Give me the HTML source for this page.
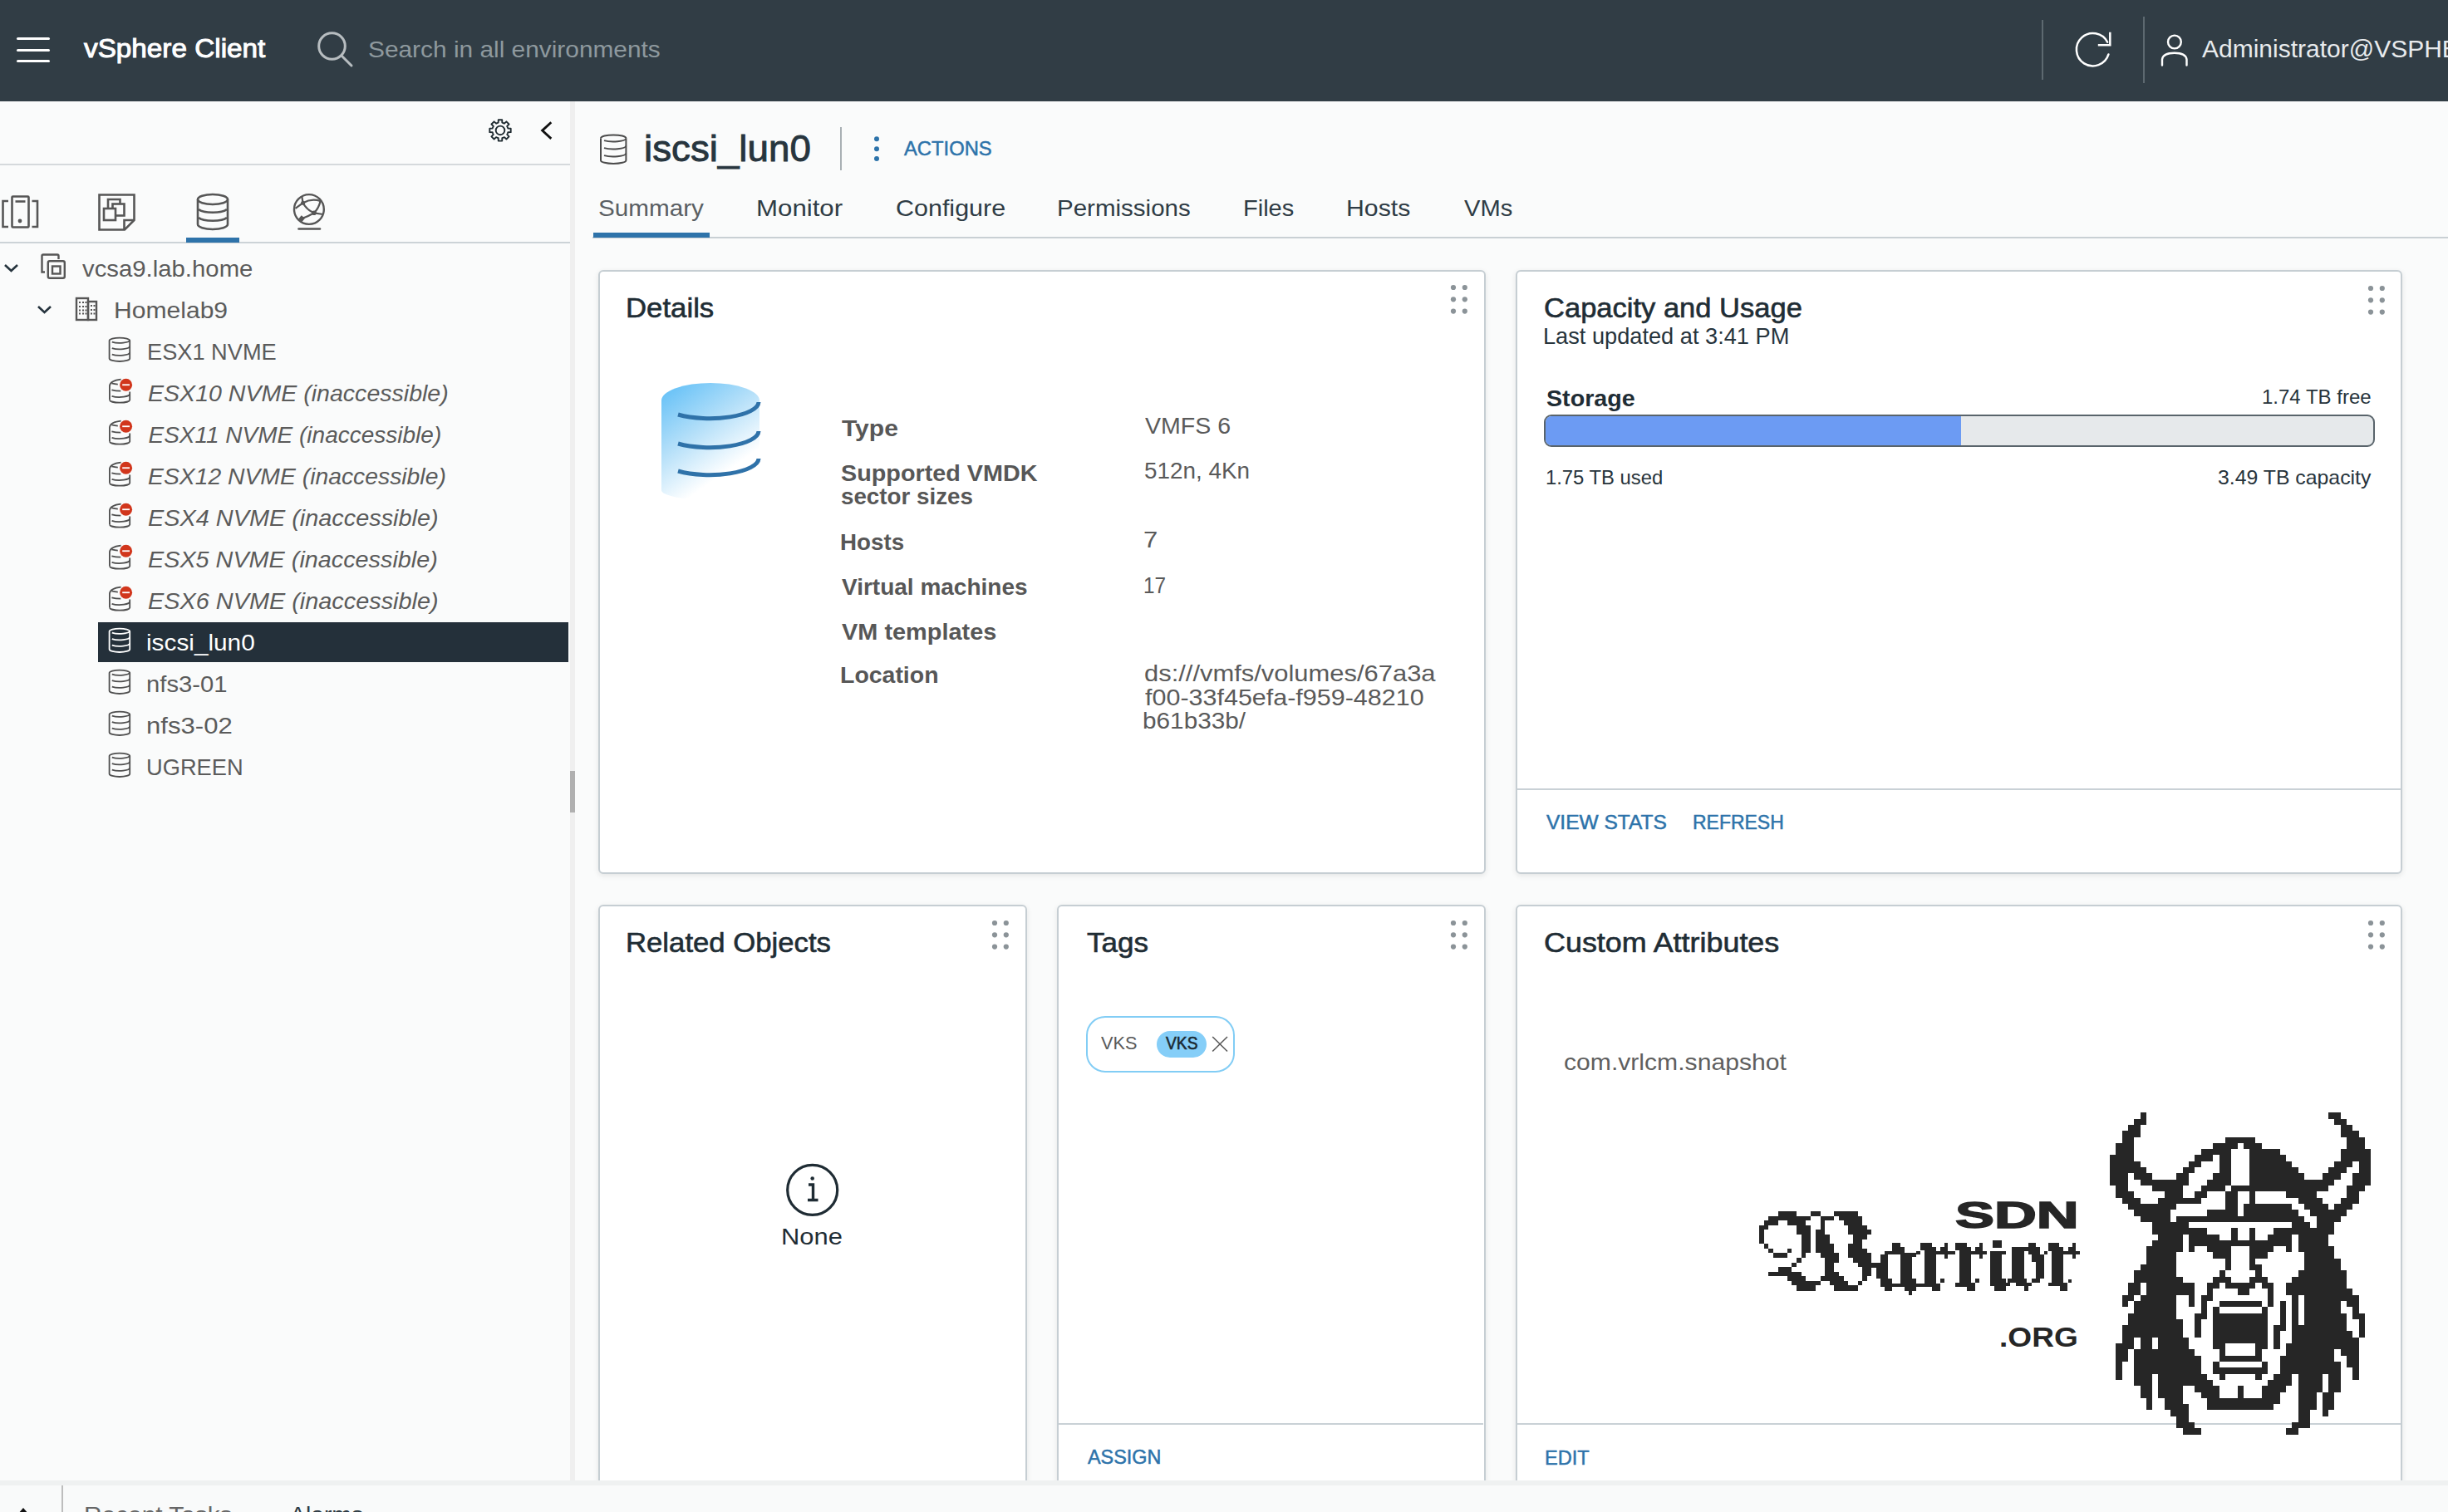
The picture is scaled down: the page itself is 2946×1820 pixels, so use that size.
<!DOCTYPE html>
<html><head><meta charset="utf-8"><title>vSphere Client</title>
<style>
html,body{margin:0;padding:0;}
body{width:2946px;height:1820px;position:relative;overflow:hidden;background:#fafbfb;font-family:'Liberation Sans', sans-serif;}
.t{position:absolute;line-height:1;white-space:pre;transform-origin:0 0;}
.a{position:absolute;}
svg.a{overflow:visible;}
</style></head><body>
<!-- header -->
<div class="a" style="left:0;top:0;width:2946px;height:122px;background:#313d45"></div>
<div class="a" style="left:20px;top:45px;width:40px;height:3px;background:#fff;border-radius:2px"></div>
<div class="a" style="left:20px;top:58.5px;width:40px;height:3px;background:#fff;border-radius:2px"></div>
<div class="a" style="left:20px;top:72px;width:40px;height:3px;background:#fff;border-radius:2px"></div>
<svg class="a" style="left:380px;top:36px" width="48" height="48" viewBox="0 0 48 48">
  <circle cx="19.5" cy="19.5" r="15.8" fill="none" stroke="#b7bdc0" stroke-width="3"/>
  <line x1="31" y1="31" x2="43" y2="43" stroke="#b7bdc0" stroke-width="3" stroke-linecap="round"/>
</svg>
<div class="a" style="left:2457px;top:24px;width:2px;height:72px;background:#5d6970"></div>
<div class="a" style="left:2579px;top:20px;width:2px;height:80px;background:#5d6970"></div>
<svg class="a" style="left:0;top:0" width="2946" height="122" viewBox="0 0 2946 122" fill="none" stroke="#ffffff" stroke-width="2.5">
  <path d="M 2537.44 65.46 A 19.7 19.7 0 1 1 2536.15 50.76" stroke-linecap="round"/>
  <path d="M 2524.8 54.2 L 2539.3 54.2 L 2539.3 38.7"/>
  <circle cx="2616.9" cy="50.5" r="7.9" stroke-width="2.4"/>
  <path d="M 2602 78.5 L 2602 71.5 Q 2603 63.8 2616.8 63.8 Q 2630.5 63.8 2631.5 71.5 L 2631.5 78.5" stroke-width="2.4" stroke-linecap="round"/>
</svg>

<!-- left panel -->
<svg class="a" style="left:0;top:0" width="700" height="200" viewBox="0 0 700 200">
  <path fill="none" stroke="#1f2b31" stroke-width="1.9" stroke-linejoin="round" d="M598.33 148.03 L599.68 147.59 L599.76 144.20 L604.24 144.20 L604.32 147.59 L605.67 148.03 L606.94 148.67 L609.40 146.33 L612.57 149.50 L610.23 151.96 L610.87 153.23 L611.31 154.58 L614.70 154.66 L614.70 159.14 L611.31 159.22 L610.87 160.57 L610.23 161.84 L612.57 164.30 L609.40 167.47 L606.94 165.13 L605.67 165.77 L604.32 166.21 L604.24 169.60 L599.76 169.60 L599.68 166.21 L598.33 165.77 L597.06 165.13 L594.60 167.47 L591.43 164.30 L593.77 161.84 L593.13 160.57 L592.69 159.22 L589.30 159.14 L589.30 154.66 L592.69 154.58 L593.13 153.23 L593.77 151.96 L591.43 149.50 L594.60 146.33 L597.06 148.67 Z"/>
  <circle cx="602.0" cy="156.9" r="5.3" fill="none" stroke="#1f2b31" stroke-width="1.9"/>
  <path d="M 663.3 147.3 L 652.6 157.1 L 663.3 166.9" fill="none" stroke="#111" stroke-width="2.8"/>
</svg>
<div class="a" style="left:0;top:197px;width:686px;height:2px;background:#d5d9dc"></div>
<!-- nav icons -->
<svg class="a" style="left:0;top:230px" width="400" height="50" viewBox="0 230 400 50" stroke="#565656" fill="none" stroke-width="2.6">
  <!-- hosts -->
  <path d="M 10 242 L 3.5 242 L 3.5 273 L 10 273"/>
  <path d="M 38.5 242 L 45 242 L 45 273 L 38.5 273"/>
  <rect x="14.5" y="236.5" width="20" height="37" rx="1"/>
  <line x1="18.5" y1="242.5" x2="30.5" y2="242.5"/>
  <circle cx="24" cy="266" r="2.4" fill="#565656" stroke="none"/>
  <!-- vms -->
  <path d="M 119.5 234.5 L 161.5 234.5 L 161.5 265 L 150 276.5 L 119.5 276.5 Z"/>
  <path d="M 161.5 265 L 149.5 265 L 149.5 276.5"/>
  <path d="M 130 251 L 130 240 L 144.5 240 L 144.5 245"/>
  <rect x="135.5" y="245.5" width="14" height="14"/>
  <rect x="125" y="251" width="14" height="14" fill="#fafbfb"/>
  <!-- storage -->
  <ellipse cx="256" cy="240" rx="18" ry="6"/>
  <path d="M 238 240 L 238 270 A 18 6 0 0 0 274 270 L 274 240"/>
  <path d="M 239 252 A 18 5.5 0 0 0 273 252"/>
  <path d="M 239 262 A 18 5.5 0 0 0 273 262"/>
  <!-- network -->
  <circle cx="371.9" cy="252" r="17.9" stroke-width="2.4"/>
  <g stroke-width="2.2">
  <path d="M 363.3 236.5 L 364.6 244.2 L 355.5 250.8"/>
  <path d="M 364.6 244.2 Q 375 238.5 385.5 242"/>
  <path d="M 364.6 244.2 Q 369 252.5 378 256.3"/>
  <path d="M 378 256.3 Q 384 250 385.5 242"/>
  <path d="M 378 256.3 L 388.8 258"/>
  <path d="M 363 263.2 Q 371 260.5 378 256.3"/>
  </g>
  <circle cx="364.6" cy="244.3" r="2.5" fill="#565656" stroke="none"/>
  <circle cx="378" cy="256.3" r="2.8" fill="#565656" stroke="none"/>
  <rect x="360.3" y="260.3" width="5.6" height="5.6" transform="rotate(40 363.1 263.1)" fill="#565656" stroke="none"/>
  <line x1="359.5" y1="275.5" x2="385" y2="275.5" stroke-linecap="round"/>
</svg>
<div class="a" style="left:0;top:291px;width:686px;height:2px;background:#ccd3d7"></div>
<div class="a" style="left:224px;top:286px;width:64px;height:6px;background:#2e73aa"></div>
<!-- tree -->
<svg class="a" style="left:0;top:300px" width="100" height="100" viewBox="0 300 100 100" fill="none" stroke-width="2.6">
  <path d="M 6 319 L 13.5 326 L 21 319" stroke="#25333d"/>
  <path d="M 46 369 L 53.5 376 L 61 369" stroke="#25333d"/>
</svg>
<svg class="a" style="left:40px;top:300px" width="100" height="100" viewBox="40 300 100 100" fill="none" stroke="#565656" stroke-width="2.4">
  <path d="M 54 327.5 L 50.5 327.5 L 50.5 308 Q 50.5 306.5 52 306.5 L 69 306.5 Q 70.5 306.5 70.5 308 L 70.5 312"/>
  <rect x="57.8" y="314.2" width="20" height="20.5" rx="2"/>
  <rect x="63" y="320.5" width="9.5" height="9"/>
  <rect x="92" y="359" width="14" height="26"/>
  <rect x="106" y="363" width="10" height="22"/>
  <g stroke="none" fill="#565656">
    <rect x="95" y="363" width="2" height="2"/><rect x="99" y="363" width="2" height="2"/><rect x="102.5" y="363" width="2" height="2"/>
    <rect x="95" y="368" width="2" height="2"/><rect x="99" y="368" width="2" height="2"/><rect x="102.5" y="368" width="2" height="2"/>
    <rect x="95" y="372.5" width="2" height="2"/><rect x="99" y="372.5" width="2" height="2"/><rect x="102.5" y="372.5" width="2" height="2"/>
    <rect x="95" y="376.5" width="2" height="2"/><rect x="99" y="376.5" width="2" height="2"/><rect x="102.5" y="376.5" width="2" height="2"/>
    <rect x="109" y="367" width="2" height="2"/><rect x="112.5" y="367" width="2" height="2"/>
    <rect x="109" y="372" width="2" height="2"/><rect x="112.5" y="372" width="2" height="2"/>
    <rect x="109" y="376.5" width="2" height="2"/><rect x="112.5" y="376.5" width="2" height="2"/>
  </g>
</svg>
<div class="a" style="left:118px;top:749px;width:566px;height:48px;background:#24303a"></div>
<svg class="a" style="left:128px;top:406px" width="34" height="34" viewBox="0 0 34 34" fill="none" stroke="#4f4f4f" stroke-width="1.8"><path d="M 3.6 4 A 12.3 3.4 0 0 1 28.2 4"/><path d="M 3.6 4 L 3.6 25.4 A 12.3 3.6 0 0 0 28.2 25.4 L 28.2 4"/><path d="M 6.8 5.72 A 12.3 3.6 0 0 0 28.2 3.30"/><path d="M 6.8 13.12 A 12.3 3.6 0 0 0 28.2 10.70"/><path d="M 6.8 20.62 A 12.3 3.6 0 0 0 28.2 18.20"/></svg>
<svg class="a" style="left:128px;top:456px" width="34" height="34" viewBox="0 0 34 34" fill="none" stroke="#4f4f4f" stroke-width="1.8"><path d="M 3.9 25.4 L 3.9 8.5 Q 4.5 2 17.6 0.6"/><path d="M 6.4 5.4 Q 10 6.4 13.8 6.6"/><path d="M 6.4 13.4 Q 11 14.6 17.3 14.6"/><path d="M 6.6 20.8 A 12.3 3.6 0 0 0 28 17.9"/><path d="M 3.9 25.4 A 12.2 3.6 0 0 0 28.2 25.4 L 28.2 15.6"/><circle cx="23.6" cy="7.2" r="7.5" fill="#d1361c" stroke="none"/><rect x="19.2" y="6.35" width="8.8" height="1.8" fill="#fff" stroke="none"/></svg>
<svg class="a" style="left:128px;top:506px" width="34" height="34" viewBox="0 0 34 34" fill="none" stroke="#4f4f4f" stroke-width="1.8"><path d="M 3.9 25.4 L 3.9 8.5 Q 4.5 2 17.6 0.6"/><path d="M 6.4 5.4 Q 10 6.4 13.8 6.6"/><path d="M 6.4 13.4 Q 11 14.6 17.3 14.6"/><path d="M 6.6 20.8 A 12.3 3.6 0 0 0 28 17.9"/><path d="M 3.9 25.4 A 12.2 3.6 0 0 0 28.2 25.4 L 28.2 15.6"/><circle cx="23.6" cy="7.2" r="7.5" fill="#d1361c" stroke="none"/><rect x="19.2" y="6.35" width="8.8" height="1.8" fill="#fff" stroke="none"/></svg>
<svg class="a" style="left:128px;top:556px" width="34" height="34" viewBox="0 0 34 34" fill="none" stroke="#4f4f4f" stroke-width="1.8"><path d="M 3.9 25.4 L 3.9 8.5 Q 4.5 2 17.6 0.6"/><path d="M 6.4 5.4 Q 10 6.4 13.8 6.6"/><path d="M 6.4 13.4 Q 11 14.6 17.3 14.6"/><path d="M 6.6 20.8 A 12.3 3.6 0 0 0 28 17.9"/><path d="M 3.9 25.4 A 12.2 3.6 0 0 0 28.2 25.4 L 28.2 15.6"/><circle cx="23.6" cy="7.2" r="7.5" fill="#d1361c" stroke="none"/><rect x="19.2" y="6.35" width="8.8" height="1.8" fill="#fff" stroke="none"/></svg>
<svg class="a" style="left:128px;top:606px" width="34" height="34" viewBox="0 0 34 34" fill="none" stroke="#4f4f4f" stroke-width="1.8"><path d="M 3.9 25.4 L 3.9 8.5 Q 4.5 2 17.6 0.6"/><path d="M 6.4 5.4 Q 10 6.4 13.8 6.6"/><path d="M 6.4 13.4 Q 11 14.6 17.3 14.6"/><path d="M 6.6 20.8 A 12.3 3.6 0 0 0 28 17.9"/><path d="M 3.9 25.4 A 12.2 3.6 0 0 0 28.2 25.4 L 28.2 15.6"/><circle cx="23.6" cy="7.2" r="7.5" fill="#d1361c" stroke="none"/><rect x="19.2" y="6.35" width="8.8" height="1.8" fill="#fff" stroke="none"/></svg>
<svg class="a" style="left:128px;top:656px" width="34" height="34" viewBox="0 0 34 34" fill="none" stroke="#4f4f4f" stroke-width="1.8"><path d="M 3.9 25.4 L 3.9 8.5 Q 4.5 2 17.6 0.6"/><path d="M 6.4 5.4 Q 10 6.4 13.8 6.6"/><path d="M 6.4 13.4 Q 11 14.6 17.3 14.6"/><path d="M 6.6 20.8 A 12.3 3.6 0 0 0 28 17.9"/><path d="M 3.9 25.4 A 12.2 3.6 0 0 0 28.2 25.4 L 28.2 15.6"/><circle cx="23.6" cy="7.2" r="7.5" fill="#d1361c" stroke="none"/><rect x="19.2" y="6.35" width="8.8" height="1.8" fill="#fff" stroke="none"/></svg>
<svg class="a" style="left:128px;top:706px" width="34" height="34" viewBox="0 0 34 34" fill="none" stroke="#4f4f4f" stroke-width="1.8"><path d="M 3.9 25.4 L 3.9 8.5 Q 4.5 2 17.6 0.6"/><path d="M 6.4 5.4 Q 10 6.4 13.8 6.6"/><path d="M 6.4 13.4 Q 11 14.6 17.3 14.6"/><path d="M 6.6 20.8 A 12.3 3.6 0 0 0 28 17.9"/><path d="M 3.9 25.4 A 12.2 3.6 0 0 0 28.2 25.4 L 28.2 15.6"/><circle cx="23.6" cy="7.2" r="7.5" fill="#d1361c" stroke="none"/><rect x="19.2" y="6.35" width="8.8" height="1.8" fill="#fff" stroke="none"/></svg>
<svg class="a" style="left:128px;top:756px" width="34" height="34" viewBox="0 0 34 34" fill="none" stroke="#ffffff" stroke-width="1.8"><path d="M 3.6 4 A 12.3 3.4 0 0 1 28.2 4"/><path d="M 3.6 4 L 3.6 25.4 A 12.3 3.6 0 0 0 28.2 25.4 L 28.2 4"/><path d="M 6.8 5.72 A 12.3 3.6 0 0 0 28.2 3.30"/><path d="M 6.8 13.12 A 12.3 3.6 0 0 0 28.2 10.70"/><path d="M 6.8 20.62 A 12.3 3.6 0 0 0 28.2 18.20"/></svg>
<svg class="a" style="left:128px;top:806px" width="34" height="34" viewBox="0 0 34 34" fill="none" stroke="#4f4f4f" stroke-width="1.8"><path d="M 3.6 4 A 12.3 3.4 0 0 1 28.2 4"/><path d="M 3.6 4 L 3.6 25.4 A 12.3 3.6 0 0 0 28.2 25.4 L 28.2 4"/><path d="M 6.8 5.72 A 12.3 3.6 0 0 0 28.2 3.30"/><path d="M 6.8 13.12 A 12.3 3.6 0 0 0 28.2 10.70"/><path d="M 6.8 20.62 A 12.3 3.6 0 0 0 28.2 18.20"/></svg>
<svg class="a" style="left:128px;top:856px" width="34" height="34" viewBox="0 0 34 34" fill="none" stroke="#4f4f4f" stroke-width="1.8"><path d="M 3.6 4 A 12.3 3.4 0 0 1 28.2 4"/><path d="M 3.6 4 L 3.6 25.4 A 12.3 3.6 0 0 0 28.2 25.4 L 28.2 4"/><path d="M 6.8 5.72 A 12.3 3.6 0 0 0 28.2 3.30"/><path d="M 6.8 13.12 A 12.3 3.6 0 0 0 28.2 10.70"/><path d="M 6.8 20.62 A 12.3 3.6 0 0 0 28.2 18.20"/></svg>
<svg class="a" style="left:128px;top:906px" width="34" height="34" viewBox="0 0 34 34" fill="none" stroke="#4f4f4f" stroke-width="1.8"><path d="M 3.6 4 A 12.3 3.4 0 0 1 28.2 4"/><path d="M 3.6 4 L 3.6 25.4 A 12.3 3.6 0 0 0 28.2 25.4 L 28.2 4"/><path d="M 6.8 5.72 A 12.3 3.6 0 0 0 28.2 3.30"/><path d="M 6.8 13.12 A 12.3 3.6 0 0 0 28.2 10.70"/><path d="M 6.8 20.62 A 12.3 3.6 0 0 0 28.2 18.20"/></svg>
<!-- splitter -->
<div class="a" style="left:686px;top:122px;width:6px;height:1660px;background:#efefef"></div>
<div class="a" style="left:686px;top:928px;width:6px;height:50px;background:#b0b0b0"></div>
<!-- title -->
<svg class="a" style="left:700px;top:150px" width="70" height="60" viewBox="700 150 70 60" fill="none" stroke="#4b4b4b" stroke-width="2">
  <path d="M 723 166.4 A 15.2 4 0 0 1 753.4 166.4"/>
  <path d="M 723 166.4 L 723 193 A 15.2 4 0 0 0 753.4 193 L 753.4 166.4"/>
  <path d="M 727 169.1 A 15.2 4 0 0 0 753.4 166.6"/>
  <path d="M 727 178.1 A 15.2 4 0 0 0 753.4 175.6"/>
  <path d="M 727 187.1 A 15.2 4 0 0 0 753.4 184.6"/>
</svg>
<div class="a" style="left:1011px;top:153px;width:2px;height:52px;background:#a9b0b4"></div>
<svg class="a" style="left:1048px;top:160px" width="14" height="38" viewBox="0 0 14 38" fill="#2d73aa">
  <circle cx="7" cy="7.2" r="3"/><circle cx="7" cy="19.2" r="3"/><circle cx="7" cy="31" r="3"/>
</svg>
<!-- tabs -->
<div class="a" style="left:713px;top:285px;width:2233px;height:2px;background:#c9d0d4"></div>
<div class="a" style="left:714px;top:280px;width:140px;height:6px;background:#2e73aa"></div>
<!-- cards -->
<div class="a" style="left:720px;top:325px;width:1064px;height:723px;border:2px solid #c6ced3;border-radius:6px;background:#fff;box-shadow:0 2px 7px rgba(0,0,0,0.09)"></div>
<div class="a" style="left:1824px;top:325px;width:1063px;height:723px;border:2px solid #c6ced3;border-radius:6px;background:#fff;box-shadow:0 2px 7px rgba(0,0,0,0.09)"></div>
<div class="a" style="left:720px;top:1089px;width:512px;height:760px;border:2px solid #c6ced3;border-radius:6px;background:#fff;box-shadow:0 2px 7px rgba(0,0,0,0.09)"></div>
<div class="a" style="left:1272px;top:1089px;width:512px;height:760px;border:2px solid #c6ced3;border-radius:6px;background:#fff;box-shadow:0 2px 7px rgba(0,0,0,0.09)"></div>
<div class="a" style="left:1824px;top:1089px;width:1063px;height:760px;border:2px solid #c6ced3;border-radius:6px;background:#fff;box-shadow:0 2px 7px rgba(0,0,0,0.09)"></div>
<!-- card footers -->
<div class="a" style="left:1826px;top:949px;width:1063px;height:2px;background:#c9d1d6"></div>
<div class="a" style="left:1274px;top:1713px;width:511px;height:2px;background:#c9d1d6"></div>
<div class="a" style="left:1826px;top:1713px;width:1063px;height:2px;background:#c9d1d6"></div>
<svg class="a" style="left:1745.0px;top:342.0px" width="24" height="38" viewBox="0 0 24 38" fill="#8b9398"><circle cx="4.0" cy="4.0" r="3.1"/><circle cx="17.8" cy="4.0" r="3.1"/><circle cx="4.0" cy="18.3" r="3.1"/><circle cx="17.8" cy="18.3" r="3.1"/><circle cx="4.0" cy="32.6" r="3.1"/><circle cx="17.8" cy="32.6" r="3.1"/></svg>
<svg class="a" style="left:2848.7px;top:343.0px" width="24" height="38" viewBox="0 0 24 38" fill="#8b9398"><circle cx="4.0" cy="4.0" r="3.1"/><circle cx="17.8" cy="4.0" r="3.1"/><circle cx="4.0" cy="18.3" r="3.1"/><circle cx="17.8" cy="18.3" r="3.1"/><circle cx="4.0" cy="32.6" r="3.1"/><circle cx="17.8" cy="32.6" r="3.1"/></svg>
<svg class="a" style="left:1192.5px;top:1107.0px" width="24" height="38" viewBox="0 0 24 38" fill="#8b9398"><circle cx="4.0" cy="4.0" r="3.1"/><circle cx="17.8" cy="4.0" r="3.1"/><circle cx="4.0" cy="18.3" r="3.1"/><circle cx="17.8" cy="18.3" r="3.1"/><circle cx="4.0" cy="32.6" r="3.1"/><circle cx="17.8" cy="32.6" r="3.1"/></svg>
<svg class="a" style="left:1745.0px;top:1107.0px" width="24" height="38" viewBox="0 0 24 38" fill="#8b9398"><circle cx="4.0" cy="4.0" r="3.1"/><circle cx="17.8" cy="4.0" r="3.1"/><circle cx="4.0" cy="18.3" r="3.1"/><circle cx="17.8" cy="18.3" r="3.1"/><circle cx="4.0" cy="32.6" r="3.1"/><circle cx="17.8" cy="32.6" r="3.1"/></svg>
<svg class="a" style="left:2848.7px;top:1107.0px" width="24" height="38" viewBox="0 0 24 38" fill="#8b9398"><circle cx="4.0" cy="4.0" r="3.1"/><circle cx="17.8" cy="4.0" r="3.1"/><circle cx="4.0" cy="18.3" r="3.1"/><circle cx="17.8" cy="18.3" r="3.1"/><circle cx="4.0" cy="32.6" r="3.1"/><circle cx="17.8" cy="32.6" r="3.1"/></svg>
<!-- details db icon -->
<svg class="a" style="left:790px;top:455px" width="130" height="155" viewBox="790 455 130 155">
  <defs>
    <linearGradient id="dbg" x1="798" y1="472" x2="868" y2="572" gradientUnits="userSpaceOnUse">
      <stop offset="0" stop-color="#68c2f7"/>
      <stop offset="0.5" stop-color="#b3dff9"/>
      <stop offset="1" stop-color="#ffffff"/>
    </linearGradient>
  </defs>
  <path d="M 796 482 A 59 21 0 0 1 914 482 L 914 590 A 59 12 0 0 1 855 602 A 59 12 0 0 1 796 590 Z" fill="url(#dbg)"/>
  <g fill="none" stroke="#2f72a9" stroke-width="5">
    <path d="M 816 499 A 59 20 0 0 0 913 484"/>
    <path d="M 816 534 A 59 20 0 0 0 913 519"/>
    <path d="M 816 567 A 59 20 0 0 0 913 552"/>
  </g>
</svg>
<!-- progress -->
<div class="a" style="left:1858px;top:499px;width:996px;height:35px;border:2px solid #59646b;border-radius:9px;background:#e6e9eb;overflow:hidden">
  <div style="position:absolute;left:0;top:0;width:500px;height:35px;background:#6c9bf3"></div>
</div>
<!-- info icon -->
<svg class="a" style="left:940px;top:1395px" width="76" height="76" viewBox="0 0 76 76">
  <circle cx="37.7" cy="37.4" r="30" fill="none" stroke="#1f2c34" stroke-width="3.2"/>
  <circle cx="37.7" cy="23.5" r="2.3" fill="#1f2c34"/>
  <path d="M 33 31 L 38.5 31 L 38.5 49.5 M 32 49.5 L 44.5 49.5" fill="none" stroke="#1f2c34" stroke-width="3.4"/>
</svg>
<!-- tag pill -->
<div class="a" style="left:1306.5px;top:1223px;width:175px;height:63.5px;border:2px solid #82cdf5;border-radius:23px;background:#fff"></div>
<div class="a" style="left:1392px;top:1241px;width:60px;height:32px;border-radius:16px;background:#85cef8"></div>
<svg class="a" style="left:1456px;top:1245px" width="26" height="26" viewBox="0 0 26 26">
  <path d="M 3.2 3 L 21 20.5 M 21 3 L 3.2 20.5" stroke="#5a5a5a" stroke-width="1.6"/>
</svg>
<!-- bottom bar -->
<div class="a" style="left:0;top:1782px;width:2946px;height:6px;background:#eff1f1"></div>
<div class="a" style="left:0;top:1788px;width:2946px;height:32px;background:#f9fafa"></div>
<div class="a" style="left:74px;top:1788px;width:2px;height:32px;background:#bdbdbd"></div>
<svg class="a" style="left:18px;top:1812px" width="20" height="10" viewBox="0 0 20 10"><path d="M 4 10 L 10 3 L 16 10 Z" fill="#111"/></svg>
<svg class="a" style="left:0;top:0" width="2946" height="1820" viewBox="0 0 2946 1820"><path fill="#262626" shape-rendering="crispEdges" d="M2575.55 1339.30H2582.86V1346.61H2575.55ZM2802.16 1339.30H2816.78V1346.61H2802.16ZM2568.24 1346.61H2582.86V1353.92H2568.24ZM2809.47 1346.61H2824.09V1353.92H2809.47ZM2560.93 1353.92H2575.55V1361.23H2560.93ZM2816.78 1353.92H2831.40V1361.23H2816.78ZM2553.62 1361.23H2575.55V1368.54H2553.62ZM2816.78 1361.23H2838.71V1368.54H2816.78ZM2553.62 1368.54H2568.24V1375.85H2553.62ZM2677.89 1368.54H2714.44V1375.85H2677.89ZM2824.09 1368.54H2846.02V1375.85H2824.09ZM2546.31 1375.85H2568.24V1383.16H2546.31ZM2663.27 1375.85H2692.51V1383.16H2663.27ZM2699.82 1375.85H2721.75V1383.16H2699.82ZM2824.09 1375.85H2846.02V1383.16H2824.09ZM2546.31 1383.16H2568.24V1390.47H2546.31ZM2648.65 1383.16H2685.20V1390.47H2648.65ZM2707.13 1383.16H2743.68V1390.47H2707.13ZM2816.78 1383.16H2853.33V1390.47H2816.78ZM2539.00 1390.47H2568.24V1397.78H2539.00ZM2641.34 1390.47H2663.27V1397.78H2641.34ZM2670.58 1390.47H2685.20V1397.78H2670.58ZM2707.13 1390.47H2750.99V1397.78H2707.13ZM2816.78 1390.47H2853.33V1397.78H2816.78ZM2539.00 1397.78H2575.55V1405.09H2539.00ZM2634.03 1397.78H2648.65V1405.09H2634.03ZM2670.58 1397.78H2685.20V1405.09H2670.58ZM2707.13 1397.78H2758.30V1405.09H2707.13ZM2809.47 1397.78H2831.40V1405.09H2809.47ZM2838.71 1397.78H2853.33V1405.09H2838.71ZM2539.00 1405.09H2582.86V1412.40H2539.00ZM2626.72 1405.09H2641.34V1412.40H2626.72ZM2670.58 1405.09H2685.20V1412.40H2670.58ZM2707.13 1405.09H2765.61V1412.40H2707.13ZM2802.16 1405.09H2824.09V1412.40H2802.16ZM2838.71 1405.09H2853.33V1412.40H2838.71ZM2539.00 1412.40H2560.93V1419.71H2539.00ZM2568.24 1412.40H2590.17V1419.71H2568.24ZM2619.41 1412.40H2634.03V1419.71H2619.41ZM2663.27 1412.40H2685.20V1419.71H2663.27ZM2707.13 1412.40H2772.92V1419.71H2707.13ZM2794.85 1412.40H2816.78V1419.71H2794.85ZM2831.40 1412.40H2853.33V1419.71H2831.40ZM2539.00 1419.71H2560.93V1427.02H2539.00ZM2575.55 1419.71H2634.03V1427.02H2575.55ZM2655.96 1419.71H2685.20V1427.02H2655.96ZM2707.13 1419.71H2809.47V1427.02H2707.13ZM2831.40 1419.71H2853.33V1427.02H2831.40ZM2546.31 1427.02H2560.93V1434.33H2546.31ZM2590.17 1427.02H2626.72V1434.33H2590.17ZM2648.65 1427.02H2677.89V1434.33H2648.65ZM2685.20 1427.02H2802.16V1434.33H2685.20ZM2824.09 1427.02H2846.02V1434.33H2824.09ZM2546.31 1434.33H2568.24V1441.64H2546.31ZM2604.79 1434.33H2626.72V1441.64H2604.79ZM2641.34 1434.33H2655.96V1441.64H2641.34ZM2677.89 1434.33H2692.51V1441.64H2677.89ZM2707.13 1434.33H2714.44V1441.64H2707.13ZM2750.99 1434.33H2787.54V1441.64H2750.99ZM2824.09 1434.33H2838.71V1441.64H2824.09ZM2553.62 1441.64H2575.55V1448.95H2553.62ZM2597.48 1441.64H2648.65V1448.95H2597.48ZM2677.89 1441.64H2692.51V1448.95H2677.89ZM2707.13 1441.64H2714.44V1448.95H2707.13ZM2765.61 1441.64H2794.85V1448.95H2765.61ZM2816.78 1441.64H2838.71V1448.95H2816.78ZM2560.93 1448.95H2619.41V1456.26H2560.93ZM2677.89 1448.95H2692.51V1456.26H2677.89ZM2699.82 1448.95H2758.30V1456.26H2699.82ZM2772.92 1448.95H2802.16V1456.26H2772.92ZM2809.47 1448.95H2831.40V1456.26H2809.47ZM2568.24 1456.26H2612.10V1463.57H2568.24ZM2655.96 1456.26H2692.51V1463.57H2655.96ZM2699.82 1456.26H2765.61V1463.57H2699.82ZM2780.23 1456.26H2824.09V1463.57H2780.23ZM2575.55 1463.57H2612.10V1470.88H2575.55ZM2619.41 1463.57H2772.92V1470.88H2619.41ZM2787.54 1463.57H2816.78V1470.88H2787.54ZM2590.17 1470.88H2634.03V1478.19H2590.17ZM2758.30 1470.88H2780.23V1478.19H2758.30ZM2787.54 1470.88H2809.47V1478.19H2787.54ZM2590.17 1478.19H2655.96V1485.50H2590.17ZM2685.20 1478.19H2692.51V1485.50H2685.20ZM2707.13 1478.19H2714.44V1485.50H2707.13ZM2736.37 1478.19H2809.47V1485.50H2736.37ZM2597.48 1485.50H2626.72V1492.81H2597.48ZM2634.03 1485.50H2670.58V1492.81H2634.03ZM2685.20 1485.50H2692.51V1492.81H2685.20ZM2707.13 1485.50H2714.44V1492.81H2707.13ZM2729.06 1485.50H2758.30V1492.81H2729.06ZM2765.61 1485.50H2802.16V1492.81H2765.61ZM2590.17 1492.81H2626.72V1500.12H2590.17ZM2634.03 1492.81H2758.30V1500.12H2634.03ZM2765.61 1492.81H2802.16V1500.12H2765.61ZM2582.86 1500.12H2626.72V1507.43H2582.86ZM2634.03 1500.12H2641.34V1507.43H2634.03ZM2655.96 1500.12H2685.20V1507.43H2655.96ZM2707.13 1500.12H2736.37V1507.43H2707.13ZM2750.99 1500.12H2758.30V1507.43H2750.99ZM2765.61 1500.12H2809.47V1507.43H2765.61ZM2582.86 1507.43H2619.41V1514.74H2582.86ZM2663.27 1507.43H2685.20V1514.74H2663.27ZM2707.13 1507.43H2729.06V1514.74H2707.13ZM2772.92 1507.43H2809.47V1514.74H2772.92ZM2582.86 1514.74H2619.41V1522.05H2582.86ZM2677.89 1514.74H2685.20V1522.05H2677.89ZM2707.13 1514.74H2714.44V1522.05H2707.13ZM2772.92 1514.74H2816.78V1522.05H2772.92ZM2575.55 1522.05H2619.41V1529.36H2575.55ZM2677.89 1522.05H2685.20V1529.36H2677.89ZM2707.13 1522.05H2721.75V1529.36H2707.13ZM2772.92 1522.05H2816.78V1529.36H2772.92ZM2568.24 1529.36H2619.41V1536.67H2568.24ZM2670.58 1529.36H2677.89V1536.67H2670.58ZM2714.44 1529.36H2721.75V1536.67H2714.44ZM2765.61 1529.36H2824.09V1536.67H2765.61ZM2568.24 1536.67H2626.72V1543.98H2568.24ZM2663.27 1536.67H2685.20V1543.98H2663.27ZM2707.13 1536.67H2729.06V1543.98H2707.13ZM2758.30 1536.67H2824.09V1543.98H2758.30ZM2560.93 1543.98H2575.55V1551.29H2560.93ZM2582.86 1543.98H2641.34V1551.29H2582.86ZM2655.96 1543.98H2670.58V1551.29H2655.96ZM2677.89 1543.98H2714.44V1551.29H2677.89ZM2721.75 1543.98H2736.37V1551.29H2721.75ZM2750.99 1543.98H2824.09V1551.29H2750.99ZM2560.93 1551.29H2575.55V1558.60H2560.93ZM2582.86 1551.29H2641.34V1558.60H2582.86ZM2655.96 1551.29H2663.27V1558.60H2655.96ZM2692.51 1551.29H2707.13V1558.60H2692.51ZM2729.06 1551.29H2736.37V1558.60H2729.06ZM2750.99 1551.29H2831.40V1558.60H2750.99ZM2553.62 1558.60H2568.24V1565.91H2553.62ZM2575.55 1558.60H2619.41V1565.91H2575.55ZM2634.03 1558.60H2641.34V1565.91H2634.03ZM2648.65 1558.60H2663.27V1565.91H2648.65ZM2729.06 1558.60H2736.37V1565.91H2729.06ZM2758.30 1558.60H2765.61V1565.91H2758.30ZM2772.92 1558.60H2838.71V1565.91H2772.92ZM2553.62 1565.91H2560.93V1573.22H2553.62ZM2568.24 1565.91H2619.41V1573.22H2568.24ZM2634.03 1565.91H2641.34V1573.22H2634.03ZM2648.65 1565.91H2655.96V1573.22H2648.65ZM2670.58 1565.91H2721.75V1573.22H2670.58ZM2729.06 1565.91H2736.37V1573.22H2729.06ZM2743.68 1565.91H2750.99V1573.22H2743.68ZM2758.30 1565.91H2765.61V1573.22H2758.30ZM2772.92 1565.91H2816.78V1573.22H2772.92ZM2824.09 1565.91H2838.71V1573.22H2824.09ZM2568.24 1573.22H2619.41V1580.53H2568.24ZM2648.65 1573.22H2655.96V1580.53H2648.65ZM2663.27 1573.22H2670.58V1580.53H2663.27ZM2721.75 1573.22H2729.06V1580.53H2721.75ZM2743.68 1573.22H2750.99V1580.53H2743.68ZM2758.30 1573.22H2765.61V1580.53H2758.30ZM2772.92 1573.22H2816.78V1580.53H2772.92ZM2831.40 1573.22H2838.71V1580.53H2831.40ZM2560.93 1580.53H2619.41V1587.84H2560.93ZM2641.34 1580.53H2655.96V1587.84H2641.34ZM2663.27 1580.53H2729.06V1587.84H2663.27ZM2743.68 1580.53H2750.99V1587.84H2743.68ZM2758.30 1580.53H2765.61V1587.84H2758.30ZM2772.92 1580.53H2824.09V1587.84H2772.92ZM2831.40 1580.53H2846.02V1587.84H2831.40ZM2560.93 1587.84H2626.72V1595.15H2560.93ZM2641.34 1587.84H2648.65V1595.15H2641.34ZM2663.27 1587.84H2729.06V1595.15H2663.27ZM2743.68 1587.84H2750.99V1595.15H2743.68ZM2758.30 1587.84H2765.61V1595.15H2758.30ZM2772.92 1587.84H2824.09V1595.15H2772.92ZM2838.71 1587.84H2846.02V1595.15H2838.71ZM2553.62 1595.15H2626.72V1602.46H2553.62ZM2641.34 1595.15H2648.65V1602.46H2641.34ZM2663.27 1595.15H2729.06V1602.46H2663.27ZM2736.37 1595.15H2750.99V1602.46H2736.37ZM2758.30 1595.15H2824.09V1602.46H2758.30ZM2838.71 1595.15H2846.02V1602.46H2838.71ZM2553.62 1602.46H2626.72V1609.77H2553.62ZM2641.34 1602.46H2648.65V1609.77H2641.34ZM2663.27 1602.46H2729.06V1609.77H2663.27ZM2736.37 1602.46H2743.68V1609.77H2736.37ZM2758.30 1602.46H2831.40V1609.77H2758.30ZM2838.71 1602.46H2846.02V1609.77H2838.71ZM2553.62 1609.77H2568.24V1617.08H2553.62ZM2575.55 1609.77H2590.17V1617.08H2575.55ZM2597.48 1609.77H2634.03V1617.08H2597.48ZM2663.27 1609.77H2729.06V1617.08H2663.27ZM2736.37 1609.77H2743.68V1617.08H2736.37ZM2758.30 1609.77H2838.71V1617.08H2758.30ZM2546.31 1617.08H2568.24V1624.39H2546.31ZM2575.55 1617.08H2590.17V1624.39H2575.55ZM2597.48 1617.08H2634.03V1624.39H2597.48ZM2663.27 1617.08H2677.89V1624.39H2663.27ZM2714.44 1617.08H2729.06V1624.39H2714.44ZM2736.37 1617.08H2743.68V1624.39H2736.37ZM2750.99 1617.08H2838.71V1624.39H2750.99ZM2546.31 1624.39H2560.93V1631.70H2546.31ZM2568.24 1624.39H2641.34V1631.70H2568.24ZM2670.58 1624.39H2677.89V1631.70H2670.58ZM2714.44 1624.39H2721.75V1631.70H2714.44ZM2750.99 1624.39H2809.47V1631.70H2750.99ZM2816.78 1624.39H2838.71V1631.70H2816.78ZM2546.31 1631.70H2560.93V1639.01H2546.31ZM2568.24 1631.70H2648.65V1639.01H2568.24ZM2670.58 1631.70H2721.75V1639.01H2670.58ZM2743.68 1631.70H2809.47V1639.01H2743.68ZM2824.09 1631.70H2838.71V1639.01H2824.09ZM2546.31 1639.01H2553.62V1646.32H2546.31ZM2568.24 1639.01H2648.65V1646.32H2568.24ZM2663.27 1639.01H2670.58V1646.32H2663.27ZM2721.75 1639.01H2729.06V1646.32H2721.75ZM2743.68 1639.01H2816.78V1646.32H2743.68ZM2824.09 1639.01H2838.71V1646.32H2824.09ZM2546.31 1646.32H2553.62V1653.63H2546.31ZM2568.24 1646.32H2648.65V1653.63H2568.24ZM2663.27 1646.32H2729.06V1653.63H2663.27ZM2743.68 1646.32H2816.78V1653.63H2743.68ZM2831.40 1646.32H2838.71V1653.63H2831.40ZM2546.31 1653.63H2553.62V1660.94H2546.31ZM2568.24 1653.63H2590.17V1660.94H2568.24ZM2597.48 1653.63H2655.96V1660.94H2597.48ZM2670.58 1653.63H2677.89V1660.94H2670.58ZM2714.44 1653.63H2721.75V1660.94H2714.44ZM2736.37 1653.63H2758.30V1660.94H2736.37ZM2765.61 1653.63H2794.85V1660.94H2765.61ZM2802.16 1653.63H2816.78V1660.94H2802.16ZM2831.40 1653.63H2838.71V1660.94H2831.40ZM2568.24 1660.94H2590.17V1668.25H2568.24ZM2597.48 1660.94H2663.27V1668.25H2597.48ZM2729.06 1660.94H2758.30V1668.25H2729.06ZM2765.61 1660.94H2794.85V1668.25H2765.61ZM2802.16 1660.94H2816.78V1668.25H2802.16ZM2575.55 1668.25H2590.17V1675.56H2575.55ZM2597.48 1668.25H2626.72V1675.56H2597.48ZM2641.34 1668.25H2670.58V1675.56H2641.34ZM2692.51 1668.25H2699.82V1675.56H2692.51ZM2721.75 1668.25H2750.99V1675.56H2721.75ZM2765.61 1668.25H2794.85V1675.56H2765.61ZM2802.16 1668.25H2816.78V1675.56H2802.16ZM2575.55 1675.56H2590.17V1682.87H2575.55ZM2597.48 1675.56H2626.72V1682.87H2597.48ZM2648.65 1675.56H2670.58V1682.87H2648.65ZM2692.51 1675.56H2699.82V1682.87H2692.51ZM2721.75 1675.56H2743.68V1682.87H2721.75ZM2765.61 1675.56H2787.54V1682.87H2765.61ZM2794.85 1675.56H2809.47V1682.87H2794.85ZM2582.86 1682.87H2590.17V1690.18H2582.86ZM2604.79 1682.87H2626.72V1690.18H2604.79ZM2655.96 1682.87H2743.68V1690.18H2655.96ZM2765.61 1682.87H2787.54V1690.18H2765.61ZM2794.85 1682.87H2809.47V1690.18H2794.85ZM2582.86 1690.18H2590.17V1697.49H2582.86ZM2604.79 1690.18H2634.03V1697.49H2604.79ZM2655.96 1690.18H2736.37V1697.49H2655.96ZM2765.61 1690.18H2787.54V1697.49H2765.61ZM2794.85 1690.18H2809.47V1697.49H2794.85ZM2612.10 1697.49H2634.03V1704.80H2612.10ZM2765.61 1697.49H2780.23V1704.80H2765.61ZM2794.85 1697.49H2802.16V1704.80H2794.85ZM2619.41 1704.80H2634.03V1712.11H2619.41ZM2765.61 1704.80H2780.23V1712.11H2765.61ZM2619.41 1712.11H2641.34V1719.42H2619.41ZM2758.30 1712.11H2780.23V1719.42H2758.30ZM2626.72 1719.42H2648.65V1726.73H2626.72ZM2750.99 1719.42H2765.61V1726.73H2750.99ZM2139.92 1458.06H2162.19V1463.65H2139.92ZM2179.22 1458.06H2190.57V1463.65H2179.22ZM2207.33 1458.06H2235.54V1463.65H2207.33ZM2128.49 1463.65H2179.22V1469.23H2128.49ZM2190.57 1463.65H2207.33V1469.23H2190.57ZM2212.92 1463.65H2241.13V1469.23H2212.92ZM2122.90 1469.23H2139.92V1474.82H2122.90ZM2151.10 1469.23H2173.37V1474.82H2151.10ZM2190.57 1469.23H2195.98V1480.41H2190.57ZM2218.77 1469.23H2241.13V1474.82H2218.77ZM2117.31 1474.82H2128.49V1480.41H2117.31ZM2162.19 1474.82H2179.22V1486.00H2162.19ZM2224.36 1474.82H2246.72V1480.41H2224.36ZM2117.31 1480.41H2122.90V1497.18H2117.31ZM2184.81 1480.41H2195.98V1486.43H2184.81ZM2224.36 1480.41H2252.30V1486.00H2224.36ZM2167.78 1486.00H2179.22V1508.36H2167.78ZM2184.81 1486.43H2201.57V1497.18H2184.81ZM2229.95 1486.00H2246.72V1491.59H2229.95ZM2229.95 1491.59H2241.13V1497.18H2229.95ZM2122.90 1497.18H2128.49V1502.77H2122.90ZM2184.81 1497.18H2207.33V1508.36H2184.81ZM2224.36 1497.18H2241.13V1502.77H2224.36ZM2128.49 1502.77H2134.25V1508.36H2128.49ZM2151.10 1502.77H2156.43V1508.36H2151.10ZM2224.36 1502.77H2246.72V1508.36H2224.36ZM2134.25 1508.36H2151.10V1513.95H2134.25ZM2167.78 1508.36H2173.37V1513.95H2167.78ZM2190.57 1508.36H2212.92V1513.95H2190.57ZM2224.36 1508.36H2252.30V1513.95H2224.36ZM2162.19 1513.95H2167.78V1519.54H2162.19ZM2195.98 1513.95H2212.92V1519.54H2195.98ZM2229.95 1513.95H2252.30V1519.54H2229.95ZM2156.43 1519.54H2162.19V1525.12H2156.43ZM2195.98 1519.54H2207.33V1530.71H2195.98ZM2235.54 1519.54H2263.48V1525.12H2235.54ZM2139.92 1525.12H2156.43V1530.71H2139.92ZM2241.13 1525.12H2252.30V1536.30H2241.13ZM2128.49 1530.71H2167.78V1536.30H2128.49ZM2195.98 1530.71H2212.92V1536.30H2195.98ZM2151.10 1536.30H2173.37V1541.89H2151.10ZM2190.57 1536.30H2218.77V1541.89H2190.57ZM2241.13 1536.30H2246.72V1541.89H2241.13ZM2156.43 1541.89H2190.57V1547.48H2156.43ZM2201.57 1541.89H2224.36V1547.48H2201.57ZM2235.54 1541.89H2241.13V1547.48H2235.54ZM2162.19 1547.48H2184.81V1553.50H2162.19ZM2207.33 1547.48H2235.54V1553.50H2207.33ZM2250.00 1520.02H2263.17V1525.54H2250.00ZM2277.27 1495.82H2286.76V1501.03H2277.27ZM2277.27 1501.03H2291.67V1505.93H2277.27ZM2268.08 1505.93H2291.67V1510.22H2268.08ZM2291.67 1508.08H2306.37V1510.22H2291.67ZM2306.37 1505.93H2310.66V1510.22H2306.37ZM2263.17 1510.22H2272.06V1520.02H2263.17ZM2257.97 1520.02H2272.06V1539.02H2257.97ZM2287.07 1510.22H2300.86V1544.53H2287.07ZM2300.86 1510.22H2306.37V1512.67H2300.86ZM2263.17 1539.02H2276.96V1544.53H2263.17ZM2301.47 1539.02H2306.07V1544.53H2301.47ZM2263.17 1544.53H2334.56V1548.82H2263.17ZM2268.08 1548.82H2276.96V1553.73H2268.08ZM2291.97 1548.82H2306.07V1553.73H2291.97ZM2296.88 1553.73H2301.47V1558.63H2296.88ZM2310.97 1495.82H2324.75V1501.03H2310.97ZM2310.97 1501.03H2329.66V1505.01H2310.97ZM2315.87 1505.01H2329.66V1544.53H2315.87ZM2329.66 1505.93H2352.94V1510.22H2329.66ZM2335.17 1501.03H2344.36V1505.93H2335.17ZM2340.07 1495.82H2344.36V1501.03H2340.07ZM2340.07 1510.22H2344.36V1515.12H2340.07ZM2335.17 1539.33H2339.77V1544.23H2335.17ZM2325.06 1548.82H2334.56V1553.73H2325.06ZM2353.25 1495.82H2366.73V1501.03H2353.25ZM2353.25 1501.03H2371.63V1505.01H2353.25ZM2357.84 1505.01H2371.63V1544.53H2357.84ZM2371.63 1505.93H2390.93V1510.22H2371.63ZM2377.14 1501.03H2386.34V1505.93H2377.14ZM2382.05 1495.82H2386.34V1501.03H2382.05ZM2382.05 1510.22H2386.34V1515.12H2382.05ZM2377.14 1539.33H2381.74V1544.23H2377.14ZM2353.25 1544.23H2376.84V1548.82H2353.25ZM2367.34 1548.82H2376.84V1553.73H2367.34ZM2398.12 1492.94H2408.88V1501.62H2398.12ZM2395.23 1505.76H2413.84V1510.31H2395.23ZM2395.23 1510.31H2409.29V1539.26H2395.23ZM2395.23 1539.26H2413.84V1543.80H2395.23ZM2395.23 1543.80H2418.80V1548.35H2395.23ZM2400.19 1548.35H2413.84V1553.73H2400.19ZM2440.72 1496.24H2449.82V1501.21H2440.72ZM2421.28 1501.21H2454.78V1505.76H2421.28ZM2421.28 1505.76H2435.76V1539.26H2421.28ZM2440.72 1505.76H2454.78V1510.31H2440.72ZM2445.27 1510.31H2459.74V1519.40H2445.27ZM2449.82 1519.40H2459.74V1539.26H2449.82ZM2416.32 1539.26H2438.65V1543.80H2416.32ZM2445.27 1539.26H2454.78V1543.80H2445.27ZM2426.24 1543.80H2444.86V1548.35H2426.24ZM2436.17 1548.35H2440.72V1553.73H2436.17ZM2459.74 1505.76H2464.29V1510.31H2459.74ZM2464.71 1496.24H2478.35V1501.21H2464.71ZM2464.71 1501.21H2483.32V1505.76H2464.71ZM2469.26 1505.76H2483.32V1543.80H2469.26ZM2483.32 1505.76H2502.75V1510.31H2483.32ZM2489.11 1501.21H2497.79V1505.76H2489.11ZM2493.66 1496.24H2497.79V1501.21H2493.66ZM2493.66 1510.31H2497.79V1514.86H2493.66ZM2489.11 1539.67H2493.24V1543.80H2489.11ZM2464.71 1543.80H2488.28V1548.35H2464.71ZM2479.18 1548.35H2488.28V1553.73H2479.18Z"/></svg>

<div class="t" style="left:101.00px;top:41.80px;font-size:32px;color:#ffffff;transform:scaleX(1.0400);-webkit-text-stroke:1.00px #ffffff;">vSphere Client</div><div class="t" style="left:442.53px;top:46.20px;font-size:28px;color:#8e999e;transform:scaleX(1.0662);">Search in all environments</div><div class="t" style="left:2650.00px;top:44.00px;font-size:30px;color:#e8ebed;">Administrator@VSPHERE.LOCAL</div><div class="t" style="left:98.50px;top:310.00px;font-size:28px;color:#5b5b5b;transform:scaleX(1.0472);">vcsa9.lab.home</div><div class="t" style="left:136.65px;top:360.00px;font-size:28px;color:#5b5b5b;transform:scaleX(1.0742);">Homelab9</div><div class="t" style="left:176.56px;top:410.00px;font-size:28px;color:#5b5b5b;transform:scaleX(0.9713);">ESX1 NVME</div><div class="t" style="left:178.48px;top:460.00px;font-size:28px;font-style:italic;color:#5b5b5b;transform:scaleX(1.0196);">ESX10 NVME (inaccessible)</div><div class="t" style="left:178.50px;top:510.00px;font-size:28px;font-style:italic;color:#5b5b5b;">ESX11 NVME (inaccessible)</div><div class="t" style="left:178.49px;top:560.00px;font-size:28px;font-style:italic;color:#5b5b5b;transform:scaleX(1.0114);">ESX12 NVME (inaccessible)</div><div class="t" style="left:178.47px;top:610.00px;font-size:28px;font-style:italic;color:#5b5b5b;transform:scaleX(1.0306);">ESX4 NVME (inaccessible)</div><div class="t" style="left:178.47px;top:660.00px;font-size:28px;font-style:italic;color:#5b5b5b;transform:scaleX(1.0282);">ESX5 NVME (inaccessible)</div><div class="t" style="left:178.47px;top:710.00px;font-size:28px;font-style:italic;color:#5b5b5b;transform:scaleX(1.0306);">ESX6 NVME (inaccessible)</div><div class="t" style="left:175.87px;top:760.00px;font-size:28px;color:#ffffff;transform:scaleX(1.0633);">iscsi_lun0</div><div class="t" style="left:175.91px;top:810.00px;font-size:28px;color:#5b5b5b;transform:scaleX(1.0444);">nfs3-01</div><div class="t" style="left:175.78px;top:860.00px;font-size:28px;color:#5b5b5b;transform:scaleX(1.1111);">nfs3-02</div><div class="t" style="left:176.05px;top:910.00px;font-size:28px;color:#5b5b5b;transform:scaleX(0.9741);">UGREEN</div><div class="t" style="left:100.87px;top:1809.50px;font-size:28px;color:#666666;transform:scaleX(1.0655);">Recent Tasks</div><div class="t" style="left:349.00px;top:1809.50px;font-size:28px;color:#2e3b43;transform:scaleX(1.0116);">Alarms</div><div class="t" style="left:774.92px;top:157.00px;font-size:44px;color:#27353e;transform:scaleX(1.0395);-webkit-text-stroke:0.90px #27353e;">iscsi_lun0</div><div class="t" style="left:1088.00px;top:166.60px;font-size:24px;color:#2d73aa;transform:scaleX(0.9906);-webkit-text-stroke:0.50px #2d73aa;">ACTIONS</div><div class="t" style="left:719.54px;top:237.00px;font-size:28px;color:#5a5f63;transform:scaleX(1.0597);">Summary</div><div class="t" style="left:910.27px;top:237.00px;font-size:28px;color:#2f3c45;transform:scaleX(1.1154);">Monitor</div><div class="t" style="left:1078.41px;top:237.00px;font-size:28px;color:#2f3c45;transform:scaleX(1.0882);">Configure</div><div class="t" style="left:1272.39px;top:237.00px;font-size:28px;color:#2f3c45;transform:scaleX(1.0540);">Permissions</div><div class="t" style="left:1495.93px;top:237.00px;font-size:28px;color:#2f3c45;transform:scaleX(1.0357);">Files</div><div class="t" style="left:1619.84px;top:237.00px;font-size:28px;color:#2f3c45;transform:scaleX(1.0812);">Hosts</div><div class="t" style="left:1761.80px;top:237.00px;font-size:28px;color:#2f3c45;transform:scaleX(1.0400);">VMs</div><div class="t" style="left:752.69px;top:354.00px;font-size:33px;color:#1f2d35;transform:scaleX(1.0531);-webkit-text-stroke:0.60px #1f2d35;">Details</div><div class="t" style="left:1013.00px;top:501.80px;font-size:28px;font-weight:700;color:#575757;transform:scaleX(1.0730);">Type</div><div class="t" style="left:1011.97px;top:555.70px;font-size:28px;font-weight:700;color:#575757;transform:scaleX(1.0271);">Supported VMDK</div><div class="t" style="left:1012.01px;top:583.60px;font-size:28px;font-weight:700;color:#575757;transform:scaleX(0.9911);">sector sizes</div><div class="t" style="left:1011.02px;top:638.60px;font-size:28px;font-weight:700;color:#575757;transform:scaleX(0.9907);">Hosts</div><div class="t" style="left:1013.00px;top:693.00px;font-size:28px;font-weight:700;color:#575757;">Virtual machines</div><div class="t" style="left:1013.00px;top:746.80px;font-size:28px;font-weight:700;color:#575757;transform:scaleX(1.0322);">VM templates</div><div class="t" style="left:1010.97px;top:799.00px;font-size:28px;font-weight:700;color:#575757;transform:scaleX(1.0159);">Location</div><div class="t" style="left:1377.60px;top:499.00px;font-size:28px;color:#5a5a5a;transform:scaleX(1.0200);">VMFS 6</div><div class="t" style="left:1376.60px;top:553.00px;font-size:28px;color:#5a5a5a;transform:scaleX(0.9952);">512n, 4Kn</div><div class="t" style="left:1376.49px;top:636.30px;font-size:28px;color:#5a5a5a;transform:scaleX(1.1077);">7</div><div class="t" style="left:1375.86px;top:690.70px;font-size:28px;color:#5a5a5a;transform:scaleX(0.8679);">17</div><div class="t" style="left:1376.50px;top:797.00px;font-size:28px;color:#5a5a5a;transform:scaleX(1.1041);">ds:///vmfs/volumes/67a3a</div><div class="t" style="left:1377.60px;top:826.40px;font-size:28px;color:#5a5a5a;transform:scaleX(1.0889);">f00-33f45efa-f959-48210</div><div class="t" style="left:1375.47px;top:854.00px;font-size:28px;color:#5a5a5a;transform:scaleX(1.0626);">b61b33b/</div><div class="t" style="left:1857.65px;top:354.00px;font-size:33px;color:#1f2d35;transform:scaleX(1.0461);-webkit-text-stroke:0.60px #1f2d35;">Capacity and Usage</div><div class="t" style="left:1856.76px;top:391.40px;font-size:28px;color:#27343c;transform:scaleX(0.9711);">Last updated at 3:41 PM</div><div class="t" style="left:1861.38px;top:465.60px;font-size:28px;font-weight:700;color:#1f2d35;transform:scaleX(1.0233);">Storage</div><div class="t" style="left:2722.00px;top:466.30px;font-size:24px;color:#27343c;">1.74 TB free</div><div class="t" style="left:1860.42px;top:562.90px;font-size:24px;color:#27343c;transform:scaleX(0.9921);">1.75 TB used</div><div class="t" style="left:2668.97px;top:562.90px;font-size:24px;color:#27343c;transform:scaleX(1.0339);">3.49 TB capacity</div><div class="t" style="left:1861.00px;top:978.40px;font-size:24px;color:#2d73aa;transform:scaleX(1.0213);-webkit-text-stroke:0.50px #2d73aa;">VIEW STATS</div><div class="t" style="left:2036.89px;top:978.40px;font-size:24px;color:#2d73aa;transform:scaleX(0.9568);-webkit-text-stroke:0.50px #2d73aa;">REFRESH</div><div class="t" style="left:752.70px;top:1117.50px;font-size:33px;color:#1f2d35;transform:scaleX(1.0517);-webkit-text-stroke:0.60px #1f2d35;">Related Objects</div><div class="t" style="left:940.39px;top:1474.60px;font-size:28px;color:#1f2d35;transform:scaleX(1.1031);">None</div><div class="t" style="left:1307.50px;top:1117.50px;font-size:33px;color:#1f2d35;transform:scaleX(1.0609);-webkit-text-stroke:0.60px #1f2d35;">Tags</div><div class="t" style="left:1325.00px;top:1244.80px;font-size:22px;color:#5a5a5a;transform:scaleX(0.9860);">VKS</div><div class="t" style="left:1403.40px;top:1245.00px;font-size:22px;color:#1b2a33;transform:scaleX(0.8744);-webkit-text-stroke:0.60px #1b2a33;">VKS</div><div class="t" style="left:1308.80px;top:1742.30px;font-size:24px;color:#2d73aa;transform:scaleX(0.9753);-webkit-text-stroke:0.50px #2d73aa;">ASSIGN</div><div class="t" style="left:1857.61px;top:1117.60px;font-size:33px;color:#1f2d35;transform:scaleX(1.0876);-webkit-text-stroke:0.60px #1f2d35;">Custom Attributes</div><div class="t" style="left:1881.82px;top:1265.00px;font-size:28px;color:#5f5f5f;transform:scaleX(1.0758);">com.vrlcm.snapshot</div><div class="t" style="left:1859.04px;top:1742.60px;font-size:24px;color:#2d73aa;transform:scaleX(0.9811);-webkit-text-stroke:0.50px #2d73aa;">EDIT</div><div class="t" style="left:2352.80px;top:1439.90px;font-size:45px;font-weight:700;color:#262626;transform:scaleX(1.5645);-webkit-text-stroke:1.60px #262626;">SDN</div><div class="t" style="left:2405.75px;top:1592.60px;font-size:33px;font-weight:700;color:#262626;transform:scaleX(1.1235);">.ORG</div>
</body></html>
